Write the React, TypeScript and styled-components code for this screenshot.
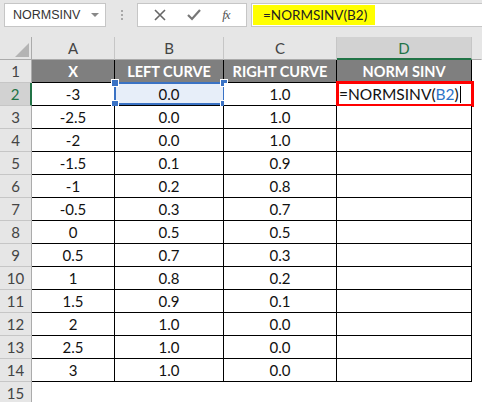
import React from "react";
import styled, { createGlobalStyle, css } from "styled-components";

const GlobalStyle = createGlobalStyle`
  html, body {
    margin: 0;
    padding: 0;
    background: #ffffff;
  }
  body {
    font-family: Lato, "Liberation Sans", sans-serif;
  }
`;

const xs = ["-3", "-2.5", "-2", "-1.5", "-1", "-0.5", "0", "0.5", "1", "1.5", "2", "2.5", "3"];
const left = ["0.0", "0.0", "0.0", "0.1", "0.2", "0.3", "0.5", "0.7", "0.8", "0.9", "1.0", "1.0", "1.0"];
const right = ["1.0", "1.0", "1.0", "0.9", "0.8", "0.7", "0.5", "0.3", "0.2", "0.1", "0.0", "0.0", "0.0"];

const App = () => {
  return (
    <>
      <GlobalStyle />
      <Page>
        <Toolbar>
          <NameBox>
            <span>NORMSINV</span>
            <DropArrow />
          </NameBox>
          <Grip>
            <i />
            <i />
            <i />
          </Grip>
          <ButtonBox>
            <svg width="12" height="12" viewBox="0 0 12 12">
              <path d="M1 1 L11 11 M11 1 L1 11" stroke="#666" strokeWidth="1.6" />
            </svg>
            <svg width="14" height="12" viewBox="0 0 14 12">
              <path d="M1 6 L5 10 L13 1" stroke="#777" strokeWidth="2.2" fill="none" />
            </svg>
            <FxText>fx</FxText>
          </ButtonBox>
          <FormulaBox>
            <Highlight>=NORMSINV(B2)</Highlight>
          </FormulaBox>
        </Toolbar>

        <Sheet>
          <Corner>
            <svg width="14" height="14" viewBox="0 0 14 14">
              <path d="M14 0 L14 14 L0 14 Z" fill="#b4b4b4" />
            </svg>
          </Corner>
          <ColHead>A</ColHead>
          <ColHead>B</ColHead>
          <ColHead>C</ColHead>
          <ColHead $active>D</ColHead>
          <ColHead $last />

          <RowHead>1</RowHead>
          <TitleCell>X</TitleCell>
          <TitleCell>LEFT CURVE</TitleCell>
          <TitleCell>RIGHT CURVE</TitleCell>
          <TitleCell>NORM SINV</TitleCell>
          <Blank />

          {xs.map((x, i) => (
            <React.Fragment key={x}>
              <RowHead $active={i === 0}>{i + 2}</RowHead>
              <Cell>{x}</Cell>
              <Cell $selected={i === 0}>
                {left[i]}
                {i === 0 && (
                  <SelFrame>
                    <Handle $top $left />
                    <Handle $top />
                    <Handle $left />
                    <Handle />
                  </SelFrame>
                )}
              </Cell>
              <Cell>{right[i]}</Cell>
              <Cell $start>
                {i === 0 && (
                  <>
                    <EditText>
                      =NORMSINV(<Ref>B2</Ref>)
                    </EditText>
                    <Caret />
                    <EditFrame />
                  </>
                )}
              </Cell>
              <Blank />
            </React.Fragment>
          ))}

          <RowHead>15</RowHead>
          <Blank />
          <Blank />
          <Blank />
          <Blank />
          <Blank />
        </Sheet>
      </Page>
    </>
  );
};

export default App;

const Page = styled.div`
  width: 482px;
  height: 402px;
  overflow: hidden;
  background: #ffffff;
`;

const Toolbar = styled.div`
  display: flex;
  align-items: flex-start;
  height: 37px;
  padding: 3px 0 0 4px;
  box-sizing: border-box;
  background: #e6e6e6;
`;

const NameBox = styled.div`
  display: flex;
  align-items: center;
  justify-content: space-between;
  width: 102px;
  height: 24px;
  padding: 0 6px 0 8px;
  box-sizing: border-box;
  background: #ffffff;
  border: 1px solid #c6c6c6;
  font-family: "Liberation Sans", sans-serif;
  font-size: 12.5px;
  color: #333;
`;

const DropArrow = styled.span`
  width: 0;
  height: 0;
  border-left: 4px solid transparent;
  border-right: 4px solid transparent;
  border-top: 4px solid #888;
`;

const Grip = styled.div`
  display: flex;
  flex-direction: column;
  align-items: center;
  justify-content: center;
  gap: 2px;
  width: 31px;
  height: 24px;

  i {
    width: 2px;
    height: 2px;
    background: #a8a8a8;
  }
`;

const ButtonBox = styled.div`
  display: flex;
  align-items: center;
  justify-content: space-around;
  width: 110px;
  height: 24px;
  padding: 0 6px;
  box-sizing: border-box;
  background: #ffffff;
  border: 1px solid #c6c6c6;
`;

const FxText = styled.span`
  font-family: "Liberation Serif", serif;
  font-style: italic;
  font-size: 13px;
  color: #555;
  letter-spacing: -1px;
`;

const FormulaBox = styled.div`
  flex: 1;
  height: 24px;
  margin-left: 4px;
  padding: 1px;
  box-sizing: border-box;
  background: #ffffff;
  border: 1px solid #c6c6c6;
  border-right: none;
`;

const Highlight = styled.div`
  display: flex;
  align-items: center;
  width: 122px;
  height: 100%;
  padding-left: 10px;
  box-sizing: border-box;
  background: #ffff00;
  font-size: 13.5px;
  color: #222;
`;

const Sheet = styled.div`
  display: grid;
  grid-template-columns: 32px 83px 109px 113px 135px 10px;
  grid-auto-rows: 23px;
`;

const headBase = css`
  display: flex;
  align-items: center;
  justify-content: center;
  box-sizing: border-box;
  background: #e6e6e6;
  color: #444;
  font-size: 15px;
`;

const Corner = styled.div`
  ${headBase};
  align-items: flex-end;
  justify-content: flex-end;
  padding: 0 2px 2px 0;
  border-right: 1px solid #ababab;
  border-bottom: 1px solid #ababab;
`;

const ColHead = styled.div<{ $active?: boolean; $last?: boolean }>`
  ${headBase};
  border-right: 1px solid ${(p) => (p.$last ? "transparent" : "#c6c6c6")};
  border-bottom: 1px solid #ababab;
  ${(p) =>
    p.$active &&
    css`
      background: #d2d2d2;
      color: #217346;
      border-bottom: 2px solid #217346;
    `}
`;

const RowHead = styled.div<{ $active?: boolean }>`
  ${headBase};
  border-right: 1px solid #ababab;
  border-bottom: 1px solid #c6c6c6;
  ${(p) =>
    p.$active &&
    css`
      background: #d2d2d2;
      color: #217346;
      border-right: 2px solid #217346;
    `}
`;

const Cell = styled.div<{ $selected?: boolean; $start?: boolean }>`
  position: relative;
  display: flex;
  align-items: center;
  justify-content: ${(p) => (p.$start ? "flex-start" : "center")};
  padding-left: ${(p) => (p.$start ? "2px" : "0")};
  box-sizing: border-box;
  border-right: 1px solid #000;
  border-bottom: 1px solid #000;
  background: ${(p) => (p.$selected ? "#e7eef9" : "#ffffff")};
  font-size: 15px;
  color: #111;
  white-space: nowrap;
`;

const TitleCell = styled(Cell)`
  background: #7f7f7f;
  color: #ffffff;
  font-weight: 700;
  font-size: 14.5px;
`;

const Blank = styled.div`
  background: #ffffff;
`;

const EditText = styled.span`
  font-size: 15.5px;
`;

const Ref = styled.span`
  color: #2e75c8;
`;

const Caret = styled.span`
  width: 1px;
  height: 17px;
  margin-left: 1px;
  background: #000;
`;

const SelFrame = styled.div`
  position: absolute;
  inset: -1px -2px 0 -1px;
  border: 2px solid #3a72c4;
`;

const Handle = styled.span<{ $top?: boolean; $left?: boolean }>`
  position: absolute;
  width: 6px;
  height: 6px;
  background: #3a72c4;
  border: 1px solid #ffffff;
  ${(p) => (p.$top ? "top: -5px;" : "bottom: -5px;")}
  ${(p) => (p.$left ? "left: -5px;" : "right: -5px;")}
`;

const EditFrame = styled.div`
  position: absolute;
  inset: -2px -3px -2px -1px;
  border: 3px solid #ff0000;
  pointer-events: none;
`;
